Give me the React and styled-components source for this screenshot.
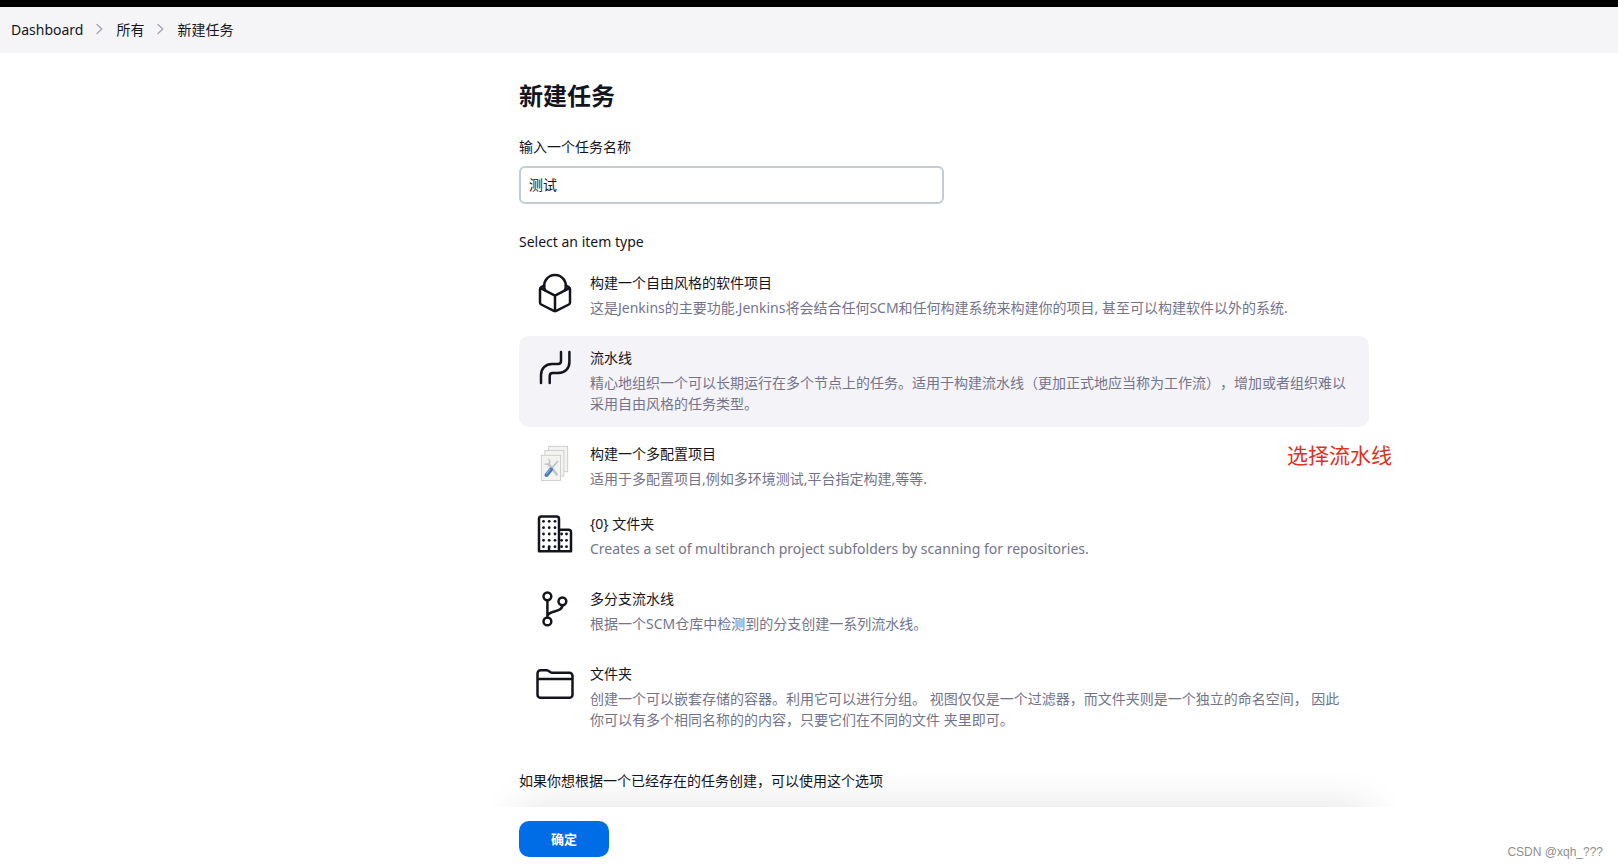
import React, { useState } from "react";
import styled, { createGlobalStyle } from "styled-components";
import { IoFolderOutline } from "react-icons/io5";

const GlobalStyle = createGlobalStyle`
  * {
    box-sizing: border-box;
  }
  body {
    margin: 0;
    background: #fff;
    color: #14141f;
    font-family: "Noto Sans", "Noto Sans CJK SC", sans-serif;
    font-size: 14px;
    line-height: 21px;
    text-spacing-trim: space-all;
  }
`;

const Page = styled.div`
  position: relative;
  display: flex;
  flex-direction: column;
  min-height: 100vh;
  overflow: hidden;
`;

const TopBar = styled.header`
  height: 7px;
  background: #000;
`;

const Breadcrumbs = styled.nav`
  display: flex;
  align-items: center;
  gap: 13px;
  height: 46px;
  padding: 0 11px 2px;
  background: #f5f5f8;

  a {
    color: inherit;
    text-decoration: none;
  }
`;

const Layout = styled.div`
  display: grid;
  grid-template-columns: 270px minmax(0, 1fr);
  flex: 1;
`;

const Form = styled.form`
  grid-column: 2;
  position: relative;
  display: flex;
  flex-direction: column;
  width: 100%;
  max-width: 850px;
  margin: 0 auto;
  padding-top: 25px;
`;

const Title = styled.h1`
  margin: 0 0 22px;
  font-size: 24px;
  line-height: 36px;
  font-weight: 700;
`;

const FieldLabel = styled.label`
  margin-bottom: 9px;
`;

const NameInput = styled.input`
  width: 50%;
  height: 38px;
  margin-bottom: 27px;
  padding: 0 8px 2px;
  border: 2px solid #c3ccd1;
  border-radius: 6px;
  background: #fff;
  color: inherit;
  font: inherit;
  outline: none;
`;

const TypeList = styled.fieldset`
  display: flex;
  flex-direction: column;
  min-width: 0;
  margin: 0;
  padding: 0;
  border: 0;
`;

const TypeHeading = styled.legend`
  padding: 0 0 9px;
`;

const TypeItem = styled.label`
  position: relative;
  display: grid;
  grid-template-columns: 40px minmax(0, 1fr);
  column-gap: 15px;
  align-items: start;
  margin-bottom: ${({ $tight }) => ($tight ? "0" : "5px")};
  padding: 11px 16px 13px;
  border-radius: 10px;
  background: ${({ $active }) => ($active ? "#f3f3f8" : "transparent")};
  cursor: pointer;

  input {
    position: absolute;
    opacity: 0;
    pointer-events: none;
  }

  svg {
    display: block;
    width: 40px;
    height: 40px;
    margin-top: 1px;
  }
`;

const TypeText = styled.span`
  display: flex;
  flex-direction: column;
  gap: 4px;
`;

const TypeDesc = styled.span`
  color: #73738c;
`;

const Note = styled.span`
  position: absolute;
  right: -23px;
  top: 8px;
  color: #e0301e;
  font-size: 21px;
  line-height: 30px;
`;

const CopyHint = styled.p`
  margin: 22px 0 16px;
`;

const Footer = styled.div`
  position: relative;
  flex: 1;
  padding: 14px 0 11px;
  background: #fff;

  &::before {
    content: "";
    position: absolute;
    inset: 0;
    box-shadow: 0 0 40px rgba(0, 0, 0, 0.12);
    clip-path: inset(-40px -40px 100% -40px);
    pointer-events: none;
  }
`;

const SubmitButton = styled.button`
  position: relative;
  width: 90px;
  height: 36px;
  border: 0;
  border-radius: 10px;
  background: #006ce6;
  color: #fff;
  font: inherit;
  font-size: 13px;
  font-weight: 700;
  cursor: pointer;
`;

const Watermark = styled.span`
  position: absolute;
  right: 15px;
  bottom: 7px;
  color: #8e8e8e;
  font-family: "Liberation Sans", sans-serif;
  font-size: 12px;
  line-height: 18px;
`;

const Chevron = () => (
  <svg width="7" height="12" viewBox="0 0 7 12" fill="none" stroke="#a5a5b8" strokeWidth="1.4" aria-hidden="true">
    <path d="M1 1.5L5.8 6L1 10.5" strokeLinecap="round" strokeLinejoin="round" />
  </svg>
);

const LineIcon = ({ children }) => (
  <svg
    viewBox="0 0 40 40"
    fill="none"
    stroke="#14141f"
    strokeWidth="2.5"
    strokeLinecap="round"
    strokeLinejoin="round"
    aria-hidden="true"
  >
    {children}
  </svg>
);

const FreestyleIcon = () => (
  <LineIcon>
    <path d="M10.3 17.5A10.8 10.8 0 1 1 29.7 17.5" />
    <path d="M9.2 12.5L6.2 14.2Q5 15 5 16.3V29.5Q5 30.8 6.2 31.5L18.8 37.8Q20 38.4 21.2 37.8L33.8 31.5Q35 30.8 35 29.5V16.3Q35 15 33.8 14.2L30.8 12.5" />
    <path d="M5.6 15.2L20 22.6L34.4 15.2M20 22.6V38" />
  </LineIcon>
);

const PipelineIcon = () => (
  <LineIcon>
    <path d="M6 35V27C6 20.5 10.5 16 17 16H23C25 16 26 15 26 13V4" />
    <path d="M14.7 35V28C14.7 26 15.7 25 17.7 25H23.5C30 25 34.4 20.5 34.4 14V4" />
  </LineIcon>
);

const MatrixIcon = () => (
  <svg viewBox="0 0 40 40" fill="none" aria-hidden="true">
    <g fill="#f3f3f1" stroke="#c6c7c3" strokeWidth="0.8">
      <rect x="13.7" y="2.3" width="19" height="25.5" />
      <rect x="9.9" y="6.6" width="19" height="25.5" />
      <rect x="6.3" y="11.3" width="19.2" height="25.2" />
    </g>
    <path d="M13.5 20L21.8 30.5" stroke="#c2c5c8" strokeWidth="2.6" strokeLinecap="round" />
    <path d="M10 19.500C11.500 21.500 15 20.500 14.800 17.500C14.700 16.200 14 15.700 13.300 15.500" stroke="#c2c5c8" strokeWidth="1.500" />
    <path d="M23 17L16.5 24.5" stroke="#b5bdc6" strokeWidth="1.5" />
    <path d="M16 25.5L11.500 31" stroke="#4a7ab8" strokeWidth="4" strokeLinecap="round" />
    <path d="M15.300 25.200L11.200 30" stroke="#86abd8" strokeWidth="1.2" />
  </svg>
);

const OrganizationIcon = () => (
  <LineIcon>
    <path d="M4 37.2V5Q4 2.6 6.4 2.6H21.6Q24 2.6 24 5V37.2ZM24 15.7H33.5Q36 15.7 36 18.2V37.2H24M14 33V37" />
    <g fill="#14141f" stroke="none">
      {[7.3, 13.7, 20, 26.3, 32.7].map(y =>
        [8.5, 14.2, 20].map(x => <circle key={`${x}-${y}`} cx={x} cy={y} r="1.4" />)
      )}
      {[20, 26.3, 32.7].map(y =>
        [26.6, 31.5].map(x => <circle key={`${x}-${y}`} cx={x} cy={y} r="1.4" />)
      )}
    </g>
  </LineIcon>
);

const BranchIcon = () => (
  <LineIcon>
    <circle cx="12.4" cy="7.3" r="3.9" />
    <circle cx="27.4" cy="12.3" r="3.9" />
    <circle cx="12.4" cy="32.4" r="3.9" />
    <path d="M12.4 11.2V28.5M27.4 16.2C27.4 24 13.5 21 12.4 27" />
  </LineIcon>
);

const FolderIcon = () => <IoFolderOutline color="#14141f" aria-hidden="true" />;

const types = [
  {
    id: "freestyle",
    icon: FreestyleIcon,
    title: "构建一个自由风格的软件项目",
    desc: "这是Jenkins的主要功能.Jenkins将会结合任何SCM和任何构建系统来构建你的项目, 甚至可以构建软件以外的系统."
  },
  {
    id: "pipeline",
    icon: PipelineIcon,
    title: "流水线",
    desc: "精心地组织一个可以长期运行在多个节点上的任务。适用于构建流水线（更加正式地应当称为工作流），增加或者组织难以采用自由风格的任务类型。"
  },
  {
    id: "matrix",
    icon: MatrixIcon,
    title: "构建一个多配置项目",
    desc: "适用于多配置项目,例如多环境测试,平台指定构建,等等.",
    note: "选择流水线",
    tight: true
  },
  {
    id: "organization",
    icon: OrganizationIcon,
    title: "{0} 文件夹",
    desc: "Creates a set of multibranch project subfolders by scanning for repositories."
  },
  {
    id: "multibranch",
    icon: BranchIcon,
    title: "多分支流水线",
    desc: "根据一个SCM仓库中检测到的分支创建一系列流水线。"
  },
  {
    id: "folder",
    icon: FolderIcon,
    title: "文件夹",
    desc: "创建一个可以嵌套存储的容器。利用它可以进行分组。 视图仅仅是一个过滤器，而文件夹则是一个独立的命名空间， 因此你可以有多个相同名称的的内容，只要它们在不同的文件 夹里即可。"
  }
];

const App = () => {
  const [name, setName] = useState("测试");
  const [selected, setSelected] = useState("pipeline");

  return (
    <Page lang="zh-CN">
      <GlobalStyle />
      <TopBar />
      <Breadcrumbs>
        <a href="#dashboard">Dashboard</a>
        <Chevron />
        <a href="#all">所有</a>
        <Chevron />
        <a href="#new">新建任务</a>
      </Breadcrumbs>
      <Layout>
        <Form onSubmit={e => e.preventDefault()}>
          <Title>新建任务</Title>
          <FieldLabel htmlFor="name">输入一个任务名称</FieldLabel>
          <NameInput id="name" type="text" value={name} onChange={e => setName(e.target.value)} />
          <TypeList>
            <TypeHeading>Select an item type</TypeHeading>
            {types.map(({ id, icon: Icon, title, desc, note, tight }) => (
              <TypeItem key={id} $active={selected === id} $tight={tight}>
                <input type="radio" name="type" value={id} checked={selected === id} onChange={() => setSelected(id)} />
                <Icon />
                <TypeText>
                  <span>{title}</span>
                  <TypeDesc>{desc}</TypeDesc>
                </TypeText>
                {note && <Note>{note}</Note>}
              </TypeItem>
            ))}
          </TypeList>
          <CopyHint>如果你想根据一个已经存在的任务创建，可以使用这个选项</CopyHint>
          <Footer>
            <SubmitButton type="submit">确定</SubmitButton>
          </Footer>
        </Form>
      </Layout>
      <Watermark>CSDN @xqh_???</Watermark>
    </Page>
  );
};

export default App;
